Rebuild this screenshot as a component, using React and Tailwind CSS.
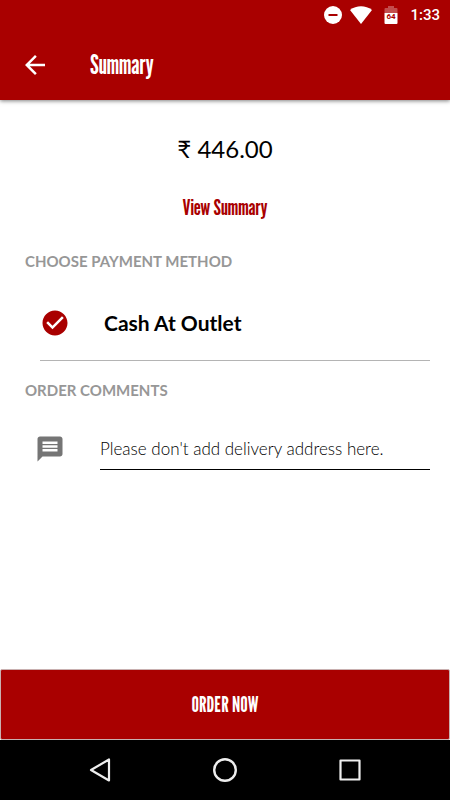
import React from "react";

const condensed = "font-['League_Gothic','Liberation_Sans_Narrow','Roboto_Condensed','Liberation_Sans',sans-serif] font-normal";

function StatusBar() {
  return (
    <div className="flex h-[30px] items-center justify-end pr-[10px] text-white">
      <svg className="mr-2 size-[18px]" viewBox="0 0 18 18" aria-label="Do not disturb">
        <circle cx="9" cy="9" r="9" fill="white" />
        <rect x="4.500" y="8" width="9" height="2" fill="#a90000" />
      </svg>
      <svg className="mr-3 h-[18px] w-[22px]" viewBox="0 0 22 18" aria-label="Wi-Fi">
        <path d="M0 4C6.500-1 15.500-1 22 4L11 18Z" fill="white" />
      </svg>
      <svg className="mr-3 h-[18px] w-[14px]" viewBox="0 0 14 18" aria-label="Battery 64%">
        <path d="M4 0H10V2H12.500Q13.500 2 13.500 3V7H.500V3Q.500 2 1.500 2H4Z" fill="white" fillOpacity=".3" />
        <path d="M.500 7H13.500V17Q13.500 18 12.500 18H1.500Q.500 18 .500 17Z" fill="white" />
        <text x="7" y="13" textAnchor="middle" fontSize="8" fontWeight="700" fontFamily="Roboto, sans-serif" fill="#a90000">64</text>
      </svg>
      <span className="font-[Roboto,sans-serif] text-[15px] font-medium">1:33</span>
    </div>
  );
}

function SectionTitle({ children }) {
  return <h2 className="px-[25px] text-[15px] leading-5 font-bold text-[#979797]">{children}</h2>;
}

export default function App() {
  return (
    <div className="flex min-h-screen flex-col bg-white font-[Lato,sans-serif] text-black">
      <header className="bg-[#a90000] shadow-[0_1px_4px_rgba(0,0,0,0.5)]">
        <StatusBar />
        <div className="flex h-[70px] items-center pl-[20px] text-white">
          <button type="button" aria-label="Back" className="size-[30px]">
            <svg viewBox="0 0 24 24" className="size-[30px]" fill="white">
              <path d="M20 11H7.830l5.590-5.590L12 4l-8 8 8 8 1.410-1.410L7.830 13H20v-2z" />
            </svg>
          </button>
          <h1 className={`ml-10 text-[26px] leading-8 ${condensed}`}>Summary</h1>
        </div>
      </header>

      <main className="flex flex-1 flex-col">
        <p className="mt-[31px] text-center text-[24px] leading-9">₹ 446.00</p>
        <button type="button" className={`mt-[26px] self-center text-[22px] leading-7 text-[#a90000] ${condensed}`}>
          View Summary
        </button>

        <div className="mt-[30px]">
          <SectionTitle>CHOOSE PAYMENT METHOD</SectionTitle>
        </div>
        <label className="mr-5 ml-10 flex h-[90px] items-center border-b border-[#b4b4b4] pt-[14px]">
          <span className="grid size-[30px] place-items-center">
            <input type="radio" name="payment" defaultChecked className="col-start-1 row-start-1 size-[26px] appearance-none rounded-full" />
            <svg viewBox="0 0 24 24" className="pointer-events-none col-start-1 row-start-1 size-[30px]" fill="#a90000">
              <path d="M12 2C6.480 2 2 6.480 2 12s4.480 10 10 10 10-4.480 10-10S17.520 2 12 2zm-2 15l-5-5 1.410-1.410L10 14.170l7.590-7.590L19 8l-9 9z" />
            </svg>
          </span>
          <span className="ml-[34px] text-[21px] leading-7 font-bold">Cash At Outlet</span>
        </label>

        <div className="mt-[19px]">
          <SectionTitle>ORDER COMMENTS</SectionTitle>
        </div>
        <div className="mt-7 mr-5 ml-[35px] flex">
          <label htmlFor="comments" aria-label="Order comments" className="mr-[35px] size-[30px] pt-[6px]">
            <svg viewBox="0 0 24 24" className="size-[30px]" fill="#757575">
              <path d="M20 2H4c-1.100 0-1.990.900-1.990 2L2 22l4-4h14c1.100 0 2-.900 2-2V4c0-1.100-.900-2-2-2zm-2 12H6v-2h12v2zm0-3H6V9h12v2zm0-3H6V6h12v2z" />
            </svg>
          </label>
          <input
            id="comments"
            type="text"
            placeholder="Please don't add delivery address here."
            className="h-[42px] min-w-0 flex-1 border-b border-black text-[17px] font-light outline-none placeholder:text-black"
          />
        </div>
      </main>

      <button type="button" className={`h-[71px] rounded-[2px] border border-[#c9b0b0] bg-[#a90000] text-[21px] text-white ${condensed}`}>
        ORDER NOW
      </button>

      <nav className="flex h-[60px] items-center justify-center gap-[95px] bg-black">
        <button type="button" aria-label="Back" className="size-[30px]">
          <svg viewBox="0 0 30 30" className="size-[30px]" fill="none" stroke="#eee" strokeWidth="2.200" strokeLinejoin="round">
            <path d="M24 4.500V25.500L6 15Z" />
          </svg>
        </button>
        <button type="button" aria-label="Home" className="size-[30px]">
          <svg viewBox="0 0 30 30" className="size-[30px]" fill="none" stroke="#eee" strokeWidth="2.400">
            <circle cx="15" cy="15" r="10.800" />
          </svg>
        </button>
        <button type="button" aria-label="Recent apps" className="size-[30px]">
          <svg viewBox="0 0 30 30" className="size-[30px]" fill="none" stroke="#eee" strokeWidth="2.200" strokeLinejoin="round">
            <rect x="5.500" y="5.500" width="19" height="19" />
          </svg>
        </button>
      </nav>
    </div>
  );
}
